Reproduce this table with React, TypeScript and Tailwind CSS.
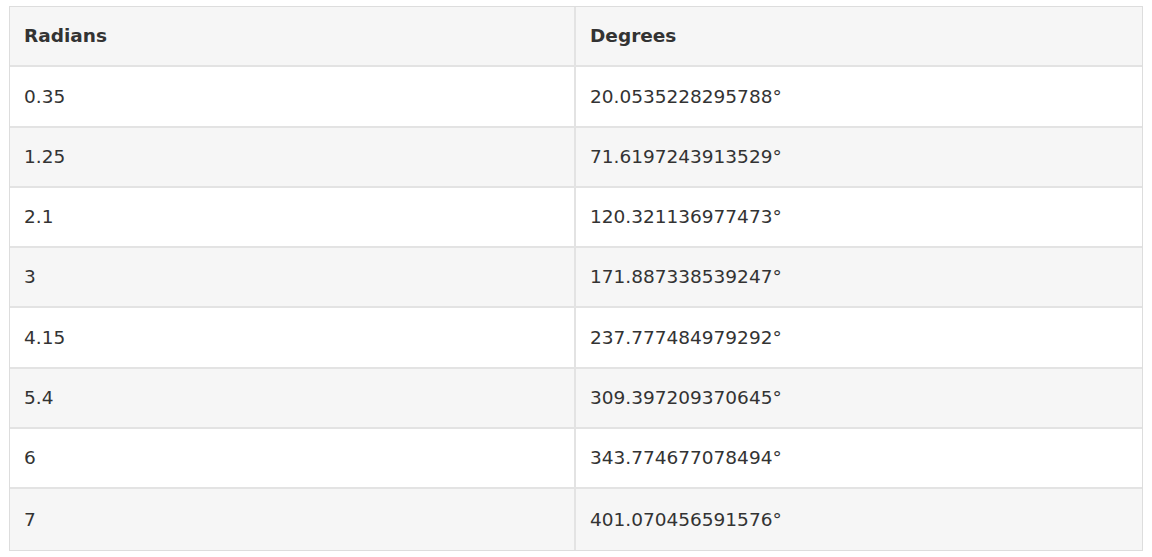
const rows: [string, string][] = [
  ['0.35', '20.0535228295788°'],
  ['1.25', '71.6197243913529°'],
  ['2.1', '120.321136977473°'],
  ['3', '171.887338539247°'],
  ['4.15', '237.777484979292°'],
  ['5.4', '309.397209370645°'],
  ['6', '343.774677078494°'],
  ['7', '401.070456591576°'],
];

export default function App() {
  return (
    <div className="w-[1152px] h-[557px] bg-white pt-[6px] pl-[9px] font-['DejaVu_Sans',sans-serif] text-[#333333]">
      <div className="w-[1134px] border border-[#dddddd]">
        <div className="flex h-[60.3px] bg-[#f6f6f6] border-b-2 border-[#e3e3e3] font-bold text-[18.5px]">
          <div className="w-1/2 flex items-center px-[14px] border-r-2 border-[#e3e3e3]">Radians</div>
          <div className="w-1/2 flex items-center px-[14px]">Degrees</div>
        </div>
        {rows.map(([rad, deg], i) => (
          <div
            key={rad}
            className={`flex h-[60.3px] text-[18.5px] ${i % 2 === 1 ? 'bg-[#f6f6f6]' : 'bg-white'} ${
              i < rows.length - 1 ? 'border-b-2 border-[#e3e3e3]' : ''
            }`}
          >
            <div className="w-1/2 flex items-center px-[14px] border-r-2 border-[#e3e3e3]">{rad}</div>
            <div className="w-1/2 flex items-center px-[14px]">{deg}</div>
          </div>
        ))}
      </div>
    </div>
  );
}
